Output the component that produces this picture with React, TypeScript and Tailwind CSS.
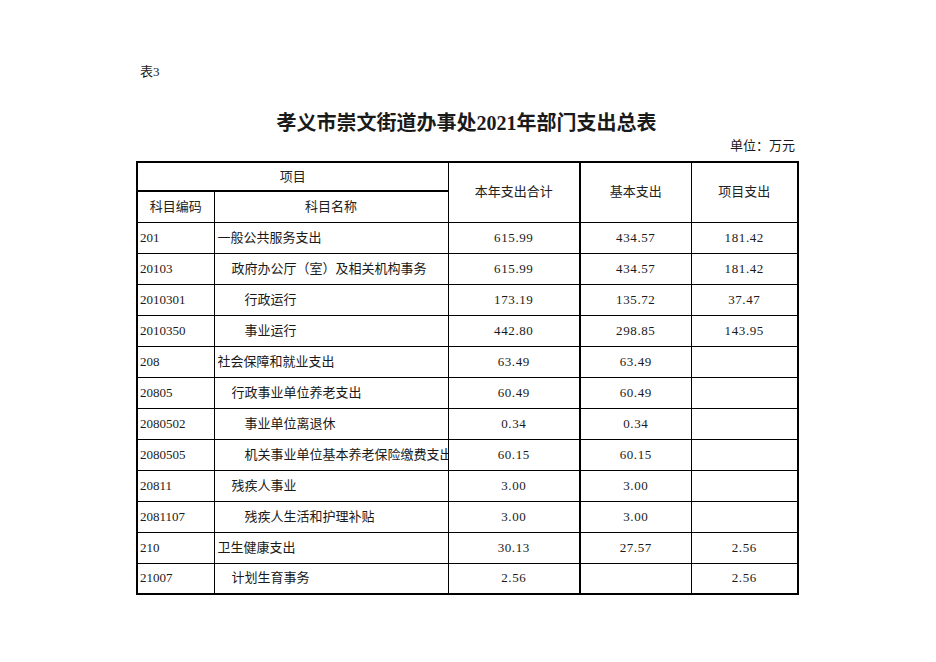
const rows: [string, string, number, string, string, string][] = [
  ["201", "一般公共服务支出", 0, "615.99", "434.57", "181.42"],
  ["20103", "政府办公厅（室）及相关机构事务", 1, "615.99", "434.57", "181.42"],
  ["2010301", "行政运行", 2, "173.19", "135.72", "37.47"],
  ["2010350", "事业运行", 2, "442.80", "298.85", "143.95"],
  ["208", "社会保障和就业支出", 0, "63.49", "63.49", ""],
  ["20805", "行政事业单位养老支出", 1, "60.49", "60.49", ""],
  ["2080502", "事业单位离退休", 2, "0.34", "0.34", ""],
  ["2080505", "机关事业单位基本养老保险缴费支出", 2, "60.15", "60.15", ""],
  ["20811", "残疾人事业", 1, "3.00", "3.00", ""],
  ["2081107", "残疾人生活和护理补贴", 2, "3.00", "3.00", ""],
  ["210", "卫生健康支出", 0, "30.13", "27.57", "2.56"],
  ["21007", "计划生育事务", 1, "2.56", "", "2.56"],
];

const indent = ["pl-[3px]", "pl-[17px]", "pl-[30px]"];

export default function App() {
  return (
    <div className="w-[936px] h-[662px] bg-white pl-[136px] text-[#1a1a1a] font-['Liberation_Serif','Noto_Sans_CJK_SC',serif]">
      <div className="w-[661px]">
        <p className="pt-[64px] pl-[4px] text-[13px] leading-[16px]">表3</p>
        <h1 className="mt-[31px] text-center text-[20px] leading-[24px] font-bold">
          孝义市崇文街道办事处2021年部门支出总表
        </h1>
        <p className="mt-[3px] pr-[2px] text-right text-[13px] leading-[16px]">单位：万元</p>
        <table className="mt-[7px] w-[661px] table-fixed border-collapse border-2 border-black text-[13px] leading-[16px]">
          <colgroup>
            <col className="w-[77px]" />
            <col className="w-[234px]" />
            <col className="w-[132px]" />
            <col className="w-[111px]" />
            <col className="w-[107px]" />
          </colgroup>
          <tbody>
            <tr className="h-[29px]">
              <td colSpan={2} className="border border-black border-b-2 text-center text-[#222]">
                项目
              </td>
              <td rowSpan={2} className="border border-black border-r-2 text-center text-[#222]">
                本年支出合计
              </td>
              <td rowSpan={2} className="border border-black text-center text-[#222]">
                基本支出
              </td>
              <td rowSpan={2} className="border border-black text-center text-[#222]">
                项目支出
              </td>
            </tr>
            <tr className="h-[31px]">
              <td className="border border-black text-center text-[#222]">科目编码</td>
              <td className="border border-black text-center text-[#222]">科目名称</td>
            </tr>
            {rows.map((r) => (
              <tr key={r[0]} className="h-[31px]">
                <td className="border border-black pl-[2px] whitespace-nowrap overflow-hidden">{r[0]}</td>
                <td className={`border border-black whitespace-nowrap overflow-hidden ${indent[r[2]]}`}>
                  {r[1]}
                </td>
                <td className="border border-black border-r-2 text-center tracking-[0.6px]">{r[3]}</td>
                <td className="border border-black text-center tracking-[0.6px]">{r[4]}</td>
                <td className="border border-black text-center tracking-[0.6px]">{r[5]}</td>
              </tr>
            ))}
          </tbody>
        </table>
      </div>
    </div>
  );
}
